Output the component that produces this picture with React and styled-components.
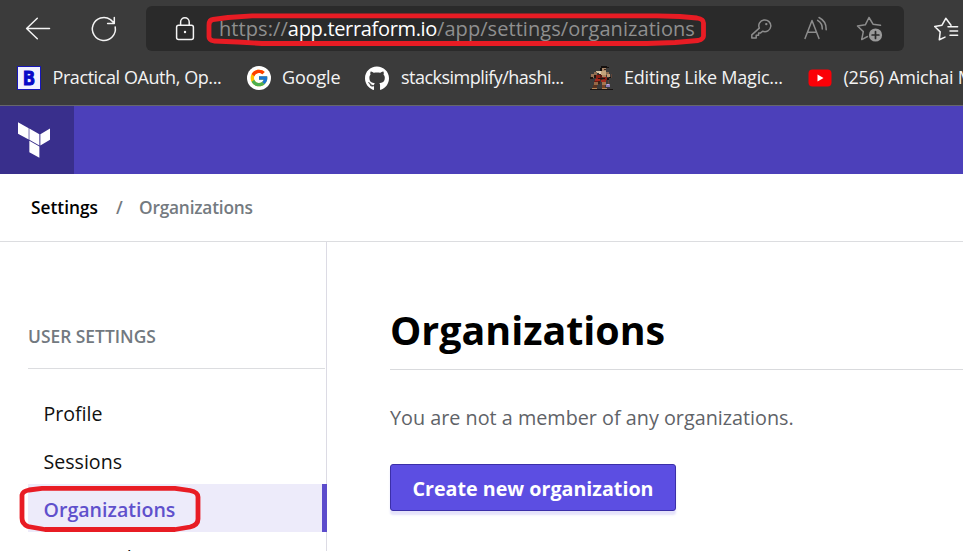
import React from 'react';
import styled, { createGlobalStyle } from 'styled-components';
import { FaGithub } from 'react-icons/fa';
import { FcGoogle } from 'react-icons/fc';

const GlobalStyle = createGlobalStyle`
  * { box-sizing: border-box; }
  body {
    margin: 0;
    background: #fff;
    font-family: "Open Sans", "Noto Sans", sans-serif;
    overflow: hidden;
  }
`;

const Window = styled.div`
  position: relative;
  width: 963px;
  height: 551px;
  overflow: hidden;
  display: flex;
  flex-direction: column;
`;

const BrowserChrome = styled.header`
  flex: none;
  height: 106px;
  background: #3b3b3b;
  border-bottom: 1px solid #66666c;
`;

const Toolbar = styled.div`
  display: flex;
  align-items: center;
  height: 51px;
  padding: 6px 0 0 24px;
`;

const Icon = styled.svg`
  display: block;
  flex: none;
  width: ${(p) => p.$w}px;
  height: ${(p) => p.$h}px;
  margin-left: ${(p) => p.$gap || 0}px;
  fill: none;
  stroke: ${(p) => p.$color || '#f4f4f4'};
  stroke-width: 1.5;
  stroke-linecap: round;
  stroke-linejoin: round;
`;

const AddressBar = styled.div`
  display: flex;
  align-items: center;
  flex: none;
  width: 758px;
  height: 45px;
  margin-left: 28px;
  padding-left: 28px;
  border-radius: 6px;
  background: #2a2a2a;
`;

const Url = styled.div`
  width: 532px;
  margin-left: 23px;
  font-size: 20px;
  line-height: 28px;
  white-space: nowrap;
  color: #8f8f8f;
`;

const UrlPart = styled.span`
  color: ${(p) => (p.$host ? '#fff' : 'inherit')};
  letter-spacing: ${(p) => p.$track}px;
`;

const Bookmarks = styled.nav`
  display: flex;
  align-items: center;
  height: 54px;
  padding-left: 17px;
`;

const Bookmark = styled.div`
  display: flex;
  align-items: center;
  flex: none;
  gap: ${(p) => p.$gap}px;
  width: ${(p) => p.$width}px;
`;

const BookmarkLabel = styled.span`
  margin-top: -2px;
  font-size: 18px;
  line-height: 24px;
  letter-spacing: ${(p) => p.$track}px;
  white-space: pre;
  color: #f3f3f3;
`;

const LetterBadge = styled.span`
  display: flex;
  align-items: center;
  justify-content: center;
  width: 24px;
  height: 24px;
  border: 1.5px solid #1717b8;
  background: #f2f2ff;
  color: #0808c8;
  font: 700 19px/20px "DejaVu Sans Mono", monospace;
  -webkit-text-stroke: 1px #0808c8;
`;

const RoundBadge = styled.span`
  display: flex;
  align-items: center;
  justify-content: center;
  width: 24px;
  height: 24px;
  border-radius: 50%;
  background: ${(p) => p.$bg};
  color: #fff;
`;

const AppHeader = styled.div`
  display: flex;
  flex: none;
  height: 68px;
  background: #4c40ba;
`;

const LogoTile = styled.div`
  width: 74px;
  padding: 16px 0 0 18px;
  background: #392f8c;
`;

const Logo = styled.svg`
  display: block;
  width: 32.4px;
  height: 36px;
  fill: #fff;
`;

const Breadcrumb = styled.nav`
  display: flex;
  align-items: center;
  flex: none;
  height: 68px;
  padding: 1px 0 0 31px;
  border-bottom: 1px solid #dcdde0;
  font-size: 17.3px;
  font-weight: 600;
  line-height: 24px;
  color: #747a80;
`;

const Crumb = styled.span`
  color: ${(p) => (p.$strong ? '#000' : 'inherit')};
  width: ${(p) => (p.$width ? p.$width + 'px' : 'auto')};
  letter-spacing: ${(p) => p.$track || 0}px;
`;

const Body = styled.div`
  display: flex;
  flex: 1;
  min-height: 0;
`;

const Sidebar = styled.aside`
  flex: none;
  width: 327px;
  padding: 82px 0 0 28px;
  border-right: 1px solid #dcdbe4;
`;

const SidebarTitle = styled.h2`
  height: 45px;
  width: 297px;
  margin: 0 0 19px;
  border-bottom: 1px solid #dcdde0;
  font-size: 17.4px;
  font-weight: 600;
  line-height: 25px;
  color: #727980;
`;

const NavItem = styled.div`
  position: relative;
  height: 48px;
  margin-right: ${(p) => (p.$active ? -1 : 0)}px;
  padding: 2px 0 0 15.5px;
  border-right: ${(p) => (p.$active ? '5px solid #5c4ccc' : 'none')};
  background: ${(p) => (p.$active ? '#edebfa' : 'transparent')};
  color: ${(p) => (p.$active ? '#5f50cc' : '#111')};
  font-size: 19.6px;
  font-weight: ${(p) => (p.$active ? 600 : 400)};
  line-height: 48px;
`;

const Main = styled.main`
  flex: 1;
  padding: 58px 0 0 63px;
`;

const Title = styled.h1`
  height: 70px;
  margin: 0;
  border-bottom: 1px solid #d9dadd;
  font-size: 39.4px;
  font-weight: 700;
  line-height: 60px;
  color: #000;
`;

const Message = styled.p`
  margin: 33px 0 32px;
  font-size: 19.8px;
  line-height: 29px;
  color: #5f6368;
`;

const PrimaryButton = styled.button`
  display: block;
  width: 286px;
  height: 47px;
  padding: 2px 0 0;
  border: 1px solid #3b2fa8;
  border-radius: 3px;
  background: #5c4ee2;
  box-shadow: 0 4px 2px rgba(92, 78, 226, 0.16);
  color: #fff;
  font: 700 19.7px/28px "Open Sans", "Noto Sans", sans-serif;
`;

const Markup = styled.svg`
  position: absolute;
  inset: 0;
  width: 963px;
  height: 551px;
  pointer-events: none;
  fill: none;
  stroke: #e81c24;
  stroke-width: 4.8;
  stroke-linejoin: round;
`;

const WARRIOR = [
  ['#15100e', 12, 0, 6, 2], ['#15100e', 11, 2, 2, 3], ['#15100e', 17, 1, 3, 1],
  ['#a98668', 13, 2, 4, 3], ['#3a241b', 15, 3, 2, 1],
  ['#d8c3a1', 7, 5, 3, 2], ['#8d6b50', 5, 6, 3, 3], ['#e0cdb0', 10, 5, 2, 3],
  ['#c5a47c', 12, 5, 5, 4], ['#8d6b50', 17, 6, 3, 3], ['#3b2219', 9, 8, 3, 2],
  ['#9a7355', 2, 8, 3, 4], ['#221612', 1, 11, 3, 2], ['#221612', 5, 9, 2, 3],
  ['#8c2217', 7, 9, 4, 5], ['#5b1711', 11, 9, 2, 5], ['#b08560', 13, 9, 4, 2],
  ['#8c2217', 14, 11, 4, 3], ['#c09a74', 18, 8, 3, 3], ['#21130f', 9, 12, 7, 1],
  ['#a72b1e', 6, 13, 5, 2], ['#6a1912', 5, 15, 4, 1], ['#a72b1e', 12, 14, 5, 2],
  ['#161110', 20, 11, 3, 1], ['#5e4337', 22, 8, 1, 4], ['#161110', 18, 12, 2, 2],
  ['#966847', 5, 16, 4, 3], ['#a47450', 13, 16, 4, 3], ['#3a2117', 9, 15, 2, 3],
  ['#5a321f', 4, 19, 4, 3], ['#774326', 13, 19, 3, 3],
  ['#5e4337', 19, 14, 1, 4], ['#8b7bb5', 17, 18, 4, 3], ['#c3b8dd', 18, 18, 2, 1],
  ['#171211', 1, 23, 23, 1], ['#b88759', 3, 22, 5, 1], ['#b88759', 13, 22, 5, 1],
];

function WarriorIcon() {
  return (
    <Icon $w={24} $h={24} viewBox="0 0 24 24" shapeRendering="crispEdges">
      {WARRIOR.map(([fill, x, y, w, h], i) => (
        <rect key={i} x={x} y={y} width={w} height={h} fill={fill} stroke="none" />
      ))}
    </Icon>
  );
}

export default function App() {
  return (
    <Window>
      <GlobalStyle />
      <BrowserChrome>
        <Toolbar>
          <Icon $w={28} $h={28} viewBox="24 14 28 28">
            <path d="M49.5 27.5H26.7M37.3 17.2L26.6 27.5L37.3 37.8" />
          </Icon>
          <Icon $w={28} $h={28} $gap={38} viewBox="90 14 28 28">
            <path d="M115.2 26A11.5 11.5 0 1 1 110.5 18.6L114.3 22.2M114.3 16.4V22.5H107.6" />
          </Icon>
          <AddressBar>
            <Icon $w={22} $h={26} viewBox="174 15 22 26">
              <rect x="176.6" y="24.2" width="16.8" height="14.2" rx="2" />
              <path d="M180.6 24V21a4.3 4.3 0 0 1 8.6 0V24" />
              <circle cx="185" cy="31" r="1.2" fill="#f4f4f4" stroke="none" />
            </Icon>
            <Url>
              <UrlPart $track={0.08}>https://</UrlPart>
              <UrlPart $host $track={-0.33}>app.terraform.io</UrlPart>
              <UrlPart $track={0.06}>/app/settings/organizations</UrlPart>
            </Url>
            <Icon $w={22} $h={22} $gap={-1} $color="#8d8d8d" viewBox="750 17.5 22 22">
              <path d="M759.3 27.6A6 5.8 0 1 1 762.6 30.7L760.6 32.4H758.6V34.8H756.2V37.4H751.8V34.4Z" />
              <circle cx="766.3" cy="23.6" r="1.2" fill="#8d8d8d" stroke="none" />
            </Icon>
            <Icon $w={26} $h={26} $gap={31} $color="#8d8d8d" viewBox="803 15 26 26">
              <path d="M805 37.4L812 19.5L819 37.4M807.4 31.2H816.6M817.6 19.4A9.5 9.5 0 0 1 822.3 28M819 16.5A13 13 0 0 1 826.2 28.7" />
            </Icon>
            <Icon $w={28} $h={28} $gap={27} $color="#8d8d8d" viewBox="856 15 28 28">
              <path d="M880.5 25.3L873 24.2L869 17.5L865.3 24.8L857.5 26L863.3 31.6L861.7 39.6L867.5 36.5" />
              <circle cx="875.5" cy="35" r="6.6" fill="#9a9a9a" stroke="none" />
              <path d="M875.5 31.6V38.4M872.1 35H878.9" stroke="#2a2a2a" strokeWidth="1.7" />
            </Icon>
          </AddressBar>
          <Icon $w={28} $h={26} $gap={29} viewBox="933 15.5 28 26">
            <path d="M948 26.3H957.6M950 30.5H957.6M950 34.7H957.6M951 24.8L945.8 17.8L942 24.7L934.7 26L940.2 31.4L939.3 39.3L945 36.6" />
          </Icon>
        </Toolbar>
        <Bookmarks>
          <Bookmark $gap={11.5} $width={230}>
            <LetterBadge>B</LetterBadge>
            <BookmarkLabel $track={-0.42}>Practical OAuth, Op...</BookmarkLabel>
          </Bookmark>
          <Bookmark $gap={11} $width={118}>
            <RoundBadge $bg="#fff"><FcGoogle size={20} /></RoundBadge>
            <BookmarkLabel $track={-0.1}>Google</BookmarkLabel>
          </Bookmark>
          <Bookmark $gap={12} $width={224}>
            <RoundBadge $bg="transparent"><FaGithub size={25} /></RoundBadge>
            <BookmarkLabel $track={-0.52}>stacksimplify/hashi...</BookmarkLabel>
          </Bookmark>
          <Bookmark $gap={11} $width={219}>
            <WarriorIcon />
            <BookmarkLabel $track={-0.22}>Editing Like Magic...</BookmarkLabel>
          </Bookmark>
          <Bookmark $gap={11.5} $width={190}>
            <Icon $w={24} $h={18} viewBox="0 0 24 18">
              <rect x="0.5" y="0.5" width="23" height="17" rx="4" fill="#fb0007" stroke="none" />
              <path d="M9.5 5.4V12.4L15.5 8.9Z" fill="#fff" stroke="none" />
            </Icon>
            <BookmarkLabel $track={-0.25}>(256) Amichai M</BookmarkLabel>
          </Bookmark>
        </Bookmarks>
      </BrowserChrome>

      <AppHeader>
        <LogoTile>
          <Logo viewBox="54 66 97 107">
            <path d="M54 66L86 84V118L54 101ZM88 85L118 102V136L88 119ZM121 102L151 84V118L121 136ZM88 122L118 139V173L88 156Z" />
          </Logo>
        </LogoTile>
      </AppHeader>

      <Breadcrumb>
        <Crumb $strong $width={85}>Settings</Crumb>
        <Crumb $width={23}>/</Crumb>
        <Crumb $track={-0.2}>Organizations</Crumb>
      </Breadcrumb>

      <Body>
        <Sidebar>
          <SidebarTitle>USER SETTINGS</SidebarTitle>
          <NavItem>Profile</NavItem>
          <NavItem>Sessions</NavItem>
          <NavItem $active>Organizations</NavItem>
          <NavItem>Password</NavItem>
        </Sidebar>
        <Main>
          <Title>Organizations</Title>
          <Message>You are not a member of any organizations.</Message>
          <PrimaryButton>Create new organization</PrimaryButton>
        </Main>
      </Body>

      <Markup viewBox="0 0 963 551">
        <path d="M209 25V37Q209 40 214 41L238 42L262 43.5H647L675 42.5L698 40.5Q703.5 39 703.5 36V23Q703.5 19 697 18L680 16.5L657 15.8H252L228 17.5L213 19.5Q209 20 209 25Z" />
        <path d="M22 495Q23 491 29 490L42 488.3H175L190 490.5Q198 492 198 497V519Q198 525 190 527L175 529.5H45L28 526.5Q22 524 22 518Z" />
      </Markup>
    </Window>
  );
}
